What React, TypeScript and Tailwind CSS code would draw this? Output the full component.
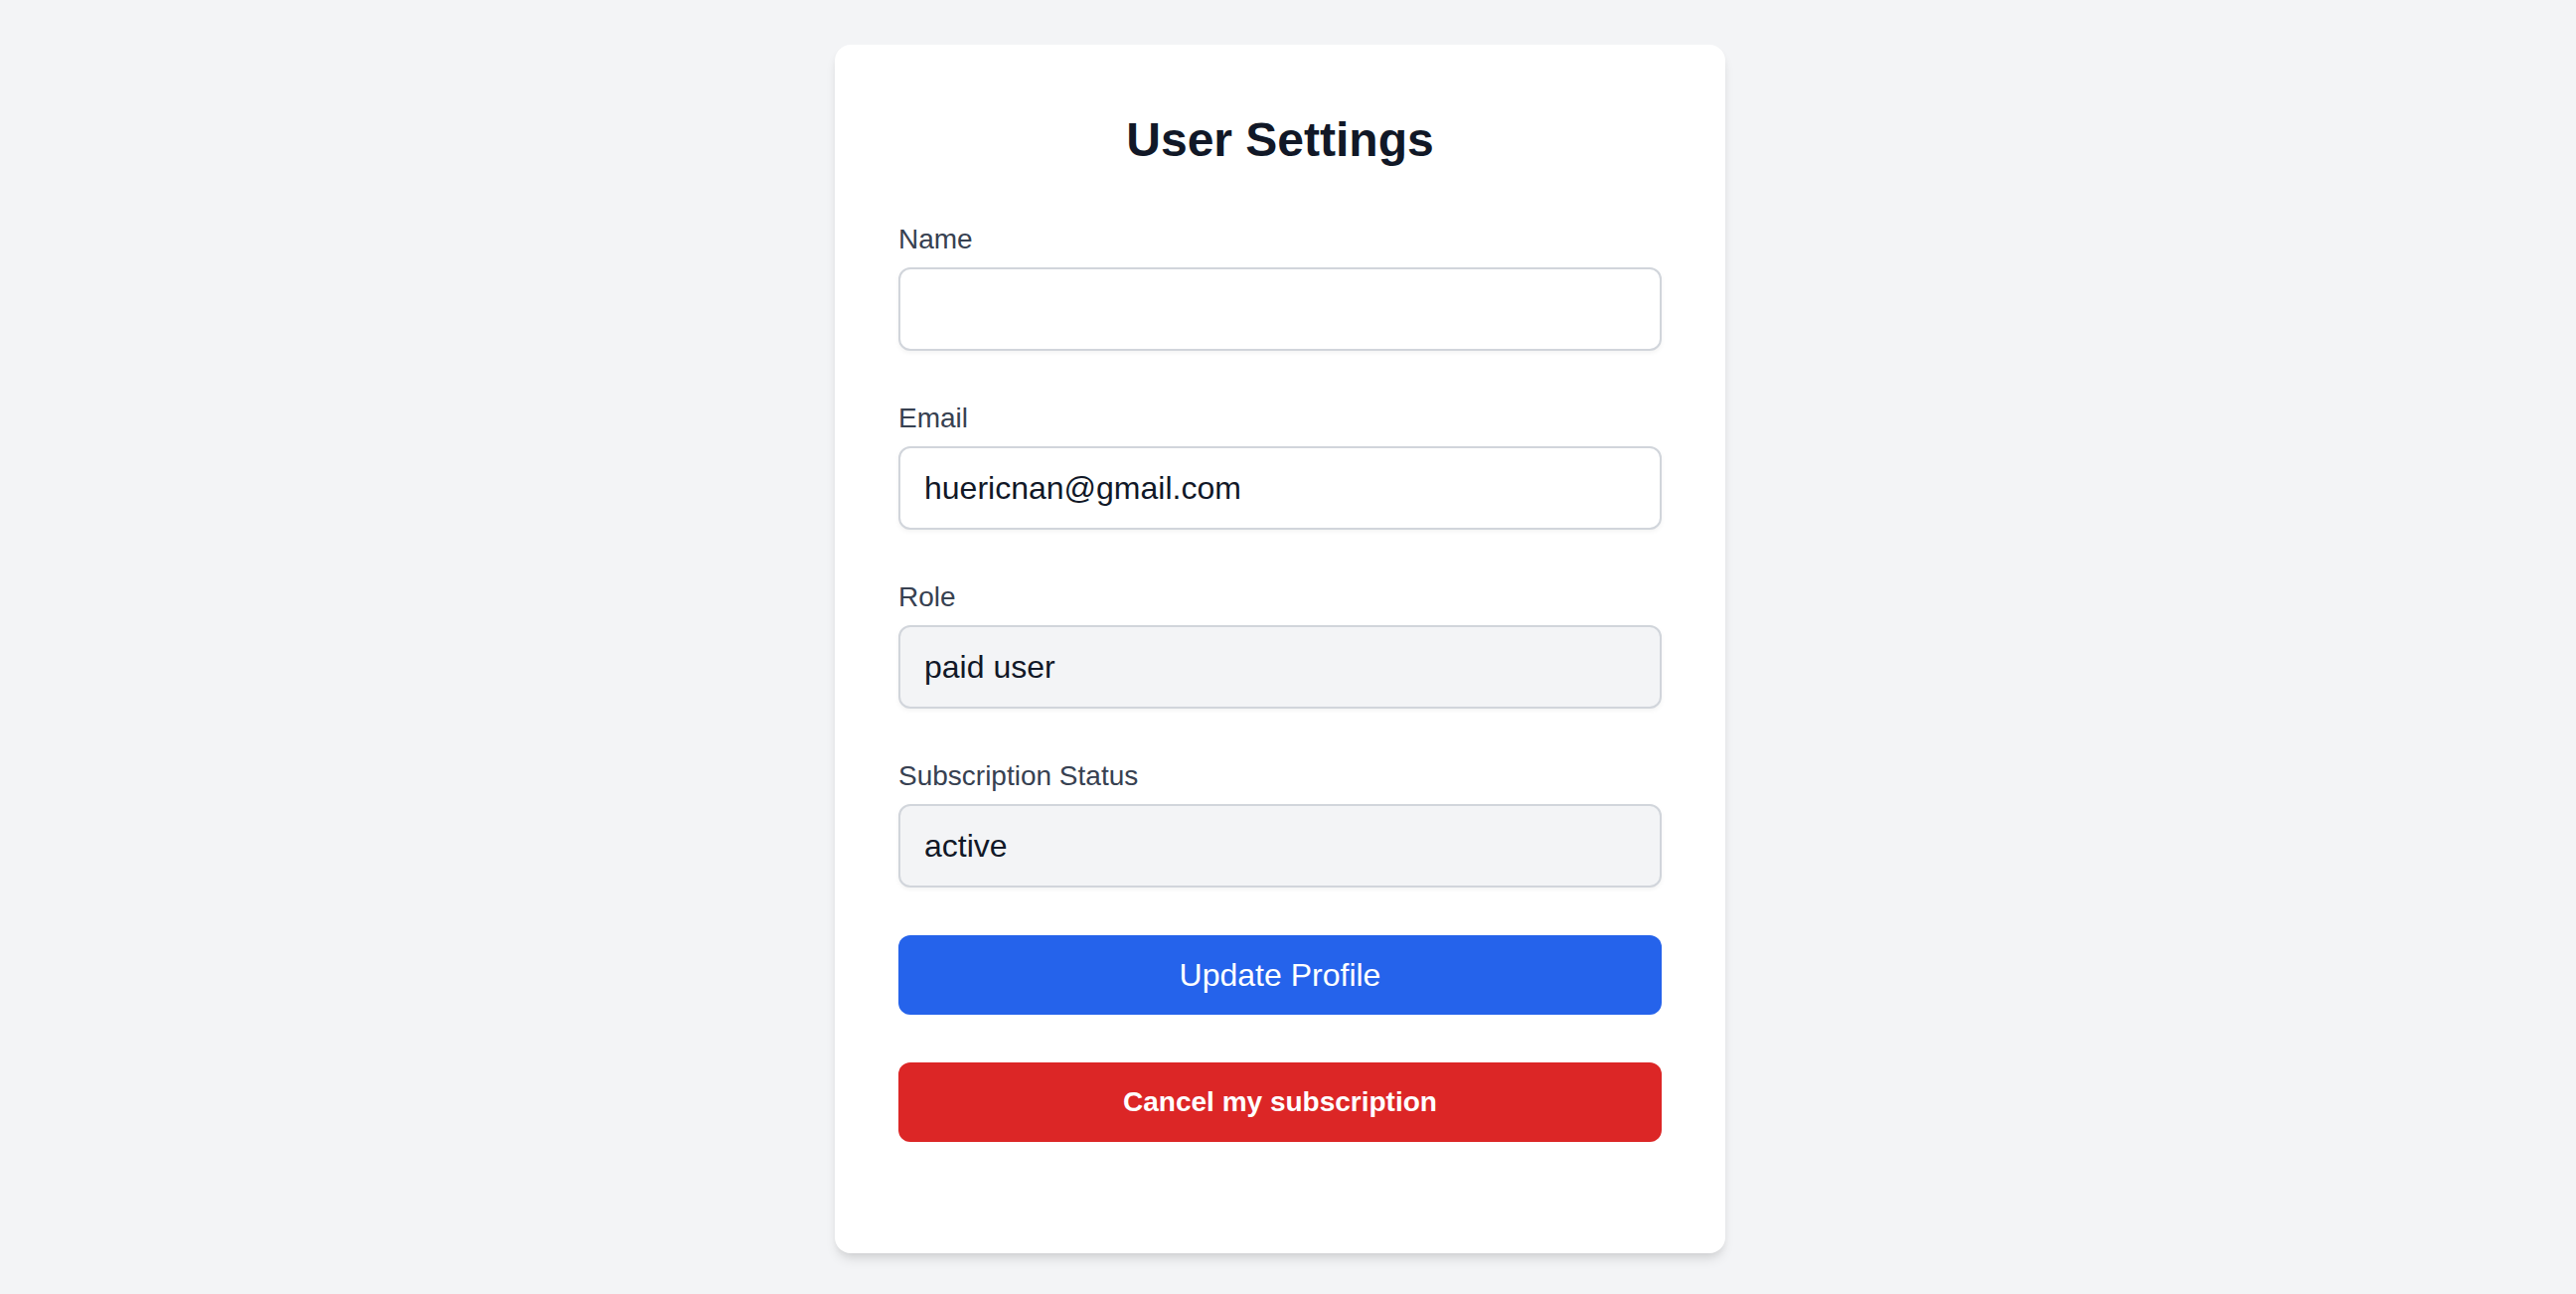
export default function App() {
  const fields = [
    { label: "Name", value: "", locked: false },
    { label: "Email", value: "huericnan@gmail.com", locked: false },
    { label: "Role", value: "paid user", locked: true },
    { label: "Subscription Status", value: "active", locked: true },
  ];

  return (
    <div className="min-h-screen bg-[#f3f4f6] pr-4 pt-1 flex items-center justify-center font-['Liberation_Sans',Arial,sans-serif]">
      <div className="w-[896px] bg-white rounded-2xl p-16 shadow-[0_8px_12px_-2px_rgba(0,0,0,0.1),0_4px_8px_-4px_rgba(0,0,0,0.1)]">
        <h1 className="text-[48px] leading-[64px] font-bold text-center text-[#111827] mb-12">User Settings</h1>

        {fields.map((f) => (
          <div key={f.label} className="mb-12">
            <label className="block text-[28px] leading-[40px] text-[#374151] mb-2">{f.label}</label>
            <input
              type="text"
              readOnly
              value={f.value}
              className={`block w-full h-[84px] px-6 border-2 border-[#d1d5db] rounded-xl text-[32px] text-[#111827] outline-none shadow-[0_2px_4px_0_rgba(0,0,0,0.05)] ${
                f.locked ? "bg-[#f3f4f6]" : "bg-white"
              }`}
            />
          </div>
        ))}

        <button className="block w-full h-20 bg-[#2563eb] text-white text-[32px] leading-[48px] rounded-xl">
          Update Profile
        </button>

        <div className="mt-12 mb-12">
          <button className="block w-full h-20 bg-[#dc2626] text-white text-[28px] leading-[40px] font-bold rounded-xl">
            Cancel my subscription
          </button>
        </div>
      </div>
    </div>
  );
}
